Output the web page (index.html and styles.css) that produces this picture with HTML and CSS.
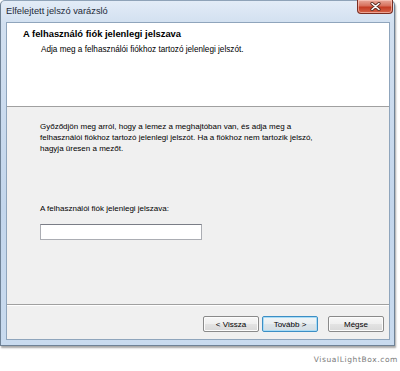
FILE: index.html
```html
<!DOCTYPE html>
<html lang="hu">
<head>
    <meta charset="UTF-8">
    <title>Elfelejtett jelszó varázsló</title>
    <link rel="stylesheet" href="styles.css">
</head>
<body>

<div class="window">
    <div class="titlebar">
        <span class="title">Elfelejtett jelszó varázsló</span>
        <button class="close" aria-label="Bezárás">
            <svg width="11" height="9" viewBox="0 0 11 9">
                <path d="M2 1.5 L9 7.5 M9 1.5 L2 7.5" stroke="#5a2a20" stroke-width="3.2" stroke-linecap="round"/>
                <path d="M2 1.5 L9 7.5 M9 1.5 L2 7.5" stroke="#fff" stroke-width="1.6" stroke-linecap="round"/>
            </svg>
        </button>
    </div>

    <div class="client">
        <div class="header">
            <div class="header-title">A felhasználó fiók jelenlegi jelszava</div>
            <div class="header-sub">Adja meg a felhasználói fiókhoz tartozó jelenlegi jelszót.</div>
        </div>

        <div class="content">
            <p class="intro">Győződjön meg arról, hogy a lemez a meghajtóban van, és adja meg a<br>
                felhasználói fiókhoz tartozó jelenlegi jelszót. Ha a fiókhoz nem tartozik jelszó,<br>
                hagyja üresen a mezőt.</p>

            <label for="pwd">A felhasználói fiók jelenlegi jelszava:</label>
            <input type="password" id="pwd">
        </div>

        <div class="footer">
            <button class="btn">&lt; Vissza</button>
            <button class="btn default">Tovább &gt;</button>
            <button class="btn cancel">Mégse</button>
        </div>
    </div>
</div>

<div class="watermark">VisualLightBox.com</div>

</body>
</html>
```

FILE: styles.css
```css
body {
    margin: 0;
    padding: 0;
    background-color: #fff;
    font-family: "Liberation Sans", Arial, sans-serif;
    font-size: 8px;
    color: #000;
}
.window {
    width: 393px;
    height: 344px;
    border: 1px solid #6f8296;
    border-top-color: #8fa3b8;
    border-radius: 5px 5px 0 0;
    background: linear-gradient(to bottom, #e3ecf7 0, #d2e0f0 22px, #c3d6ec 60%, #c9dbef 100%);
    box-shadow: 1px 2px 2px rgba(0, 0, 0, 0.35);
    display: flex;
    flex-direction: column;
}
.titlebar {
    height: 21px;
    display: flex;
    align-items: flex-start;
    padding-left: 5px;
    padding-right: 1px;
}
.title {
    line-height: 21px;
    font-size: 9.3px;
    color: #1e2a38;
}
.close {
    margin-left: auto;
    width: 36px;
    height: 14px;
    margin-top: -1px;
    padding: 0;
    border: 1px solid #7b2e22;
    border-top: none;
    border-radius: 0 0 4px 4px;
    background: linear-gradient(to bottom, #e9a99b 0, #d7705c 45%, #c43c24 55%, #d5644a 100%);
    box-shadow: inset 0 0 0 1px rgba(255, 210, 200, 0.6);
    display: flex;
    align-items: center;
    justify-content: center;
}
.client {
    flex: 1;
    margin: 0 4px 5px 5px;
    border: 1px solid #8fa5bc;
    background-color: #f0f0f0;
    display: flex;
    flex-direction: column;
}
.header {
    height: 83px;
    background-color: #fff;
    border-bottom: 1px solid #a0a0a0;
    padding: 0 16px;
}
.header-title {
    font-weight: bold;
    font-size: 9.4px;
    margin-top: 5px;
    line-height: 12px;
}
.header-sub {
    font-size: 8.2px;
    padding-left: 18px;
    line-height: 13px;
    margin-top: 3px;
}
.content {
    flex: 1;
    padding: 14px 20px 0 33px;
    border-bottom: 1px solid #a0a0a0;
    display: flex;
    flex-direction: column;
    align-items: flex-start;
}
.intro {
    margin: 0;
    line-height: 11px;
    white-space: nowrap;
}
label {
    margin-top: 49px;
    line-height: 11px;
}
input[type="password"] {
    margin-top: 10px;
    box-sizing: border-box;
    width: 162px;
    height: 16px;
    border: 1px solid #abadb3;
    border-top-color: #7a7d86;
    background: #fff;
    padding: 0 2px;
}
.footer {
    border-top: 1px solid #fff;
    height: 34px;
    display: flex;
    justify-content: flex-end;
    align-items: flex-start;
    padding: 10px 5px 0 0;
    box-sizing: border-box;
}
.btn {
    width: 56px;
    height: 16px;
    padding: 0;
    margin-left: 3px;
    font-family: inherit;
    font-size: 8px;
    color: #000;
    border: 1px solid #8a8a8a;
    border-radius: 2px;
    background: linear-gradient(to bottom, #f7f7f7 0, #efefef 50%, #e3e3e3 51%, #d9d9d9 100%);
    box-shadow: inset 0 0 0 1px #fcfcfc;
}
.btn.default {
    border-color: #3c8ec4;
    box-shadow: inset 0 0 0 1px #a9dcf6;
    background: linear-gradient(to bottom, #f1f5f7 0, #e8eef1 50%, #dce5ea 51%, #d3dde3 100%);
}
.btn.cancel {
    margin-left: 10px;
}
.watermark {
    width: 398px;
    text-align: right;
    margin-top: 9px;
    font-family: "DejaVu Sans", sans-serif;
    font-size: 7.5px;
    letter-spacing: 0.6px;
    color: #7a7a7a;
}
```
